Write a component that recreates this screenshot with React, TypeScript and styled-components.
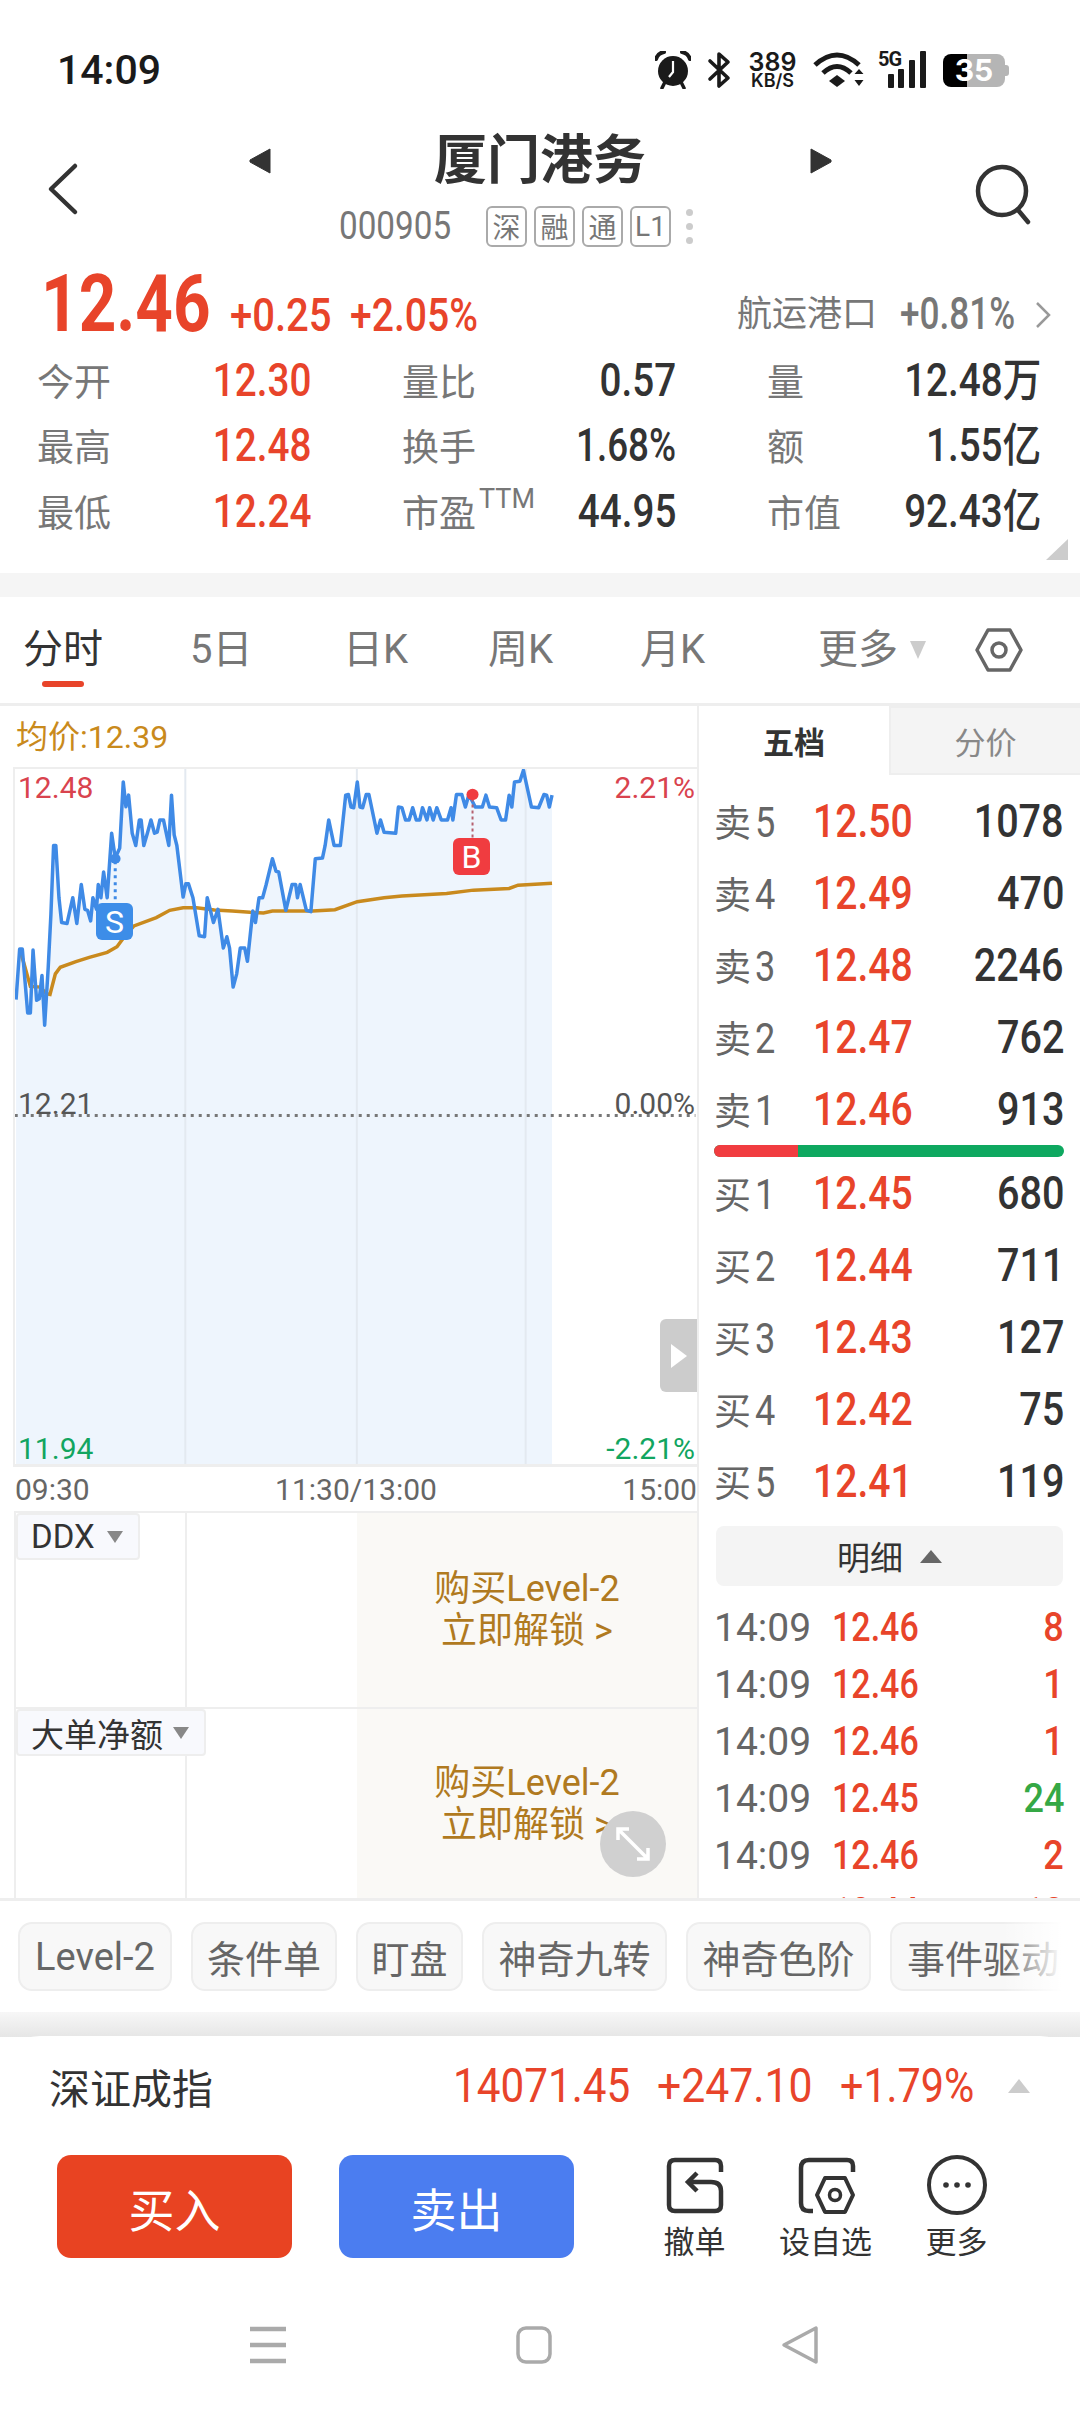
import React from 'react'
import styled, { createGlobalStyle } from 'styled-components'

const RED = '#e8442a'
const DARK = '#333333'
const GRAY = '#777777'
const LINE = '#eeeeee'

const GlobalStyle = createGlobalStyle`
  * { box-sizing: border-box; }
  html, body { margin: 0; padding: 0; background: #fff; }
  body { font-family: Roboto, 'Noto Sans CJK SC', sans-serif; color: ${DARK}; }
`

const Page = styled.div`
  width: 1080px;
  height: 2412px;
  display: flex;
  flex-direction: column;
  overflow: hidden;
  background: #fff;
`

// the quote font is a narrow DIN, so digits get squeezed horizontally
const Num = styled.span<{ $size: number; $sx?: number; $color?: string; $weight?: number; $origin?: string; $gap?: number }>`
  display: inline-block;
  margin-left: ${p => p.$gap ?? 0}px;
  font-size: ${p => p.$size}px;
  line-height: 1;
  font-weight: ${p => p.$weight ?? 500};
  color: ${p => p.$color ?? 'inherit'};
  white-space: nowrap;
  transform: scaleX(${p => p.$sx ?? 0.84});
  transform-origin: ${p => p.$origin ?? 'left'} center;
`

/* status bar */
const StatusBar = styled.div`
  height: 104px;
  padding: 36px 71px 0 57px;
  display: flex;
  align-items: center;
  justify-content: space-between;
  color: #1a1a1a;
`
const Clock = styled.div`
  font-size: 41px;
  font-weight: 500;
`
const StatusIcons = styled.div`
  display: flex;
  align-items: center;
  gap: 16px;
`
const Speed = styled.div`
  width: 49px;
  display: flex;
  flex-direction: column;
  align-items: center;
  font-family: Inter, sans-serif;
  font-weight: 600;
  line-height: 1;
`
const SpeedValue = styled.span`
  font-size: 25px;
  height: 21px;
  line-height: 21px;
`
const SpeedUnit = styled.span`
  font-size: 18px;
  height: 15px;
  line-height: 15px;
`
const Signal = styled.div`
  position: relative;
  width: 49px;
  height: 38px;
  margin-left: -2px;
`
const SignalLabel = styled.span`
  position: absolute;
  left: 0;
  top: -1px;
  font-size: 20px;
  line-height: 18px;
  font-weight: 700;
  letter-spacing: -1px;
`
const Battery = styled.div`
  position: relative;
  width: 62px;
  height: 33px;
  margin-right: 4px;
  border-radius: 8px;
  background: linear-gradient(90deg, #000 24px, #b5b5b5 24px);
  display: flex;
  align-items: center;
  justify-content: center;
  color: #fff;
  font-family: Inter, sans-serif;
  font-size: 30px;
  font-weight: 700;

  &::after {
    content: '';
    position: absolute;
    right: -4px;
    top: 11px;
    width: 4px;
    height: 11px;
    border-radius: 0 3px 3px 0;
    background: #b5b5b5;
  }
`

/* stock header */
const Header = styled.div`
  height: 160px;
  padding: 0 48px;
  display: flex;
  align-items: flex-start;
  justify-content: space-between;
`
const HeaderIcon = styled.svg`
  margin-top: 60px;
  flex: none;
  overflow: visible;
`
const HeaderCenter = styled.div`
  flex: 1;
  margin-left: 28px;
  display: flex;
  flex-direction: column;
  align-items: center;
  padding-top: 27px;
`
const TitleRow = styled.div`
  width: 583px;
  height: 60px;
  display: flex;
  align-items: center;
  justify-content: space-between;
`
const Title = styled.h1`
  margin: 0;
  font-size: 53px;
  font-weight: 700;
  line-height: 60px;
`
const CodeRow = styled.div`
  display: flex;
  align-items: center;
  height: 42px;
  margin-top: 14px;
  padding-right: 48px;
`
const Code = styled.div`
  width: 147px;
  color: ${GRAY};
`
const Tag = styled.span`
  width: 41px;
  height: 41px;
  margin-right: 7px;
  border: 2px solid #aaa;
  border-radius: 6px;
  display: flex;
  align-items: center;
  justify-content: center;
  font-size: 28px;
  color: ${GRAY};
`
const MoreDots = styled.div`
  margin-left: 8px;
  display: flex;
  flex-direction: column;
  gap: 7px;
`
const MoreDot = styled.i`
  width: 7px;
  height: 7px;
  border-radius: 50%;
  background: #cccccc;
`

/* quote block */
const Quote = styled.section`
  position: relative;
  height: 309px;
`
const PriceRow = styled.div`
  height: 83px;
  padding-left: 41px;
  display: grid;
  grid-template-columns: 189px 120px 387px 163px 135px auto;
  align-items: baseline;
  color: ${RED};
`
const IndustryName = styled.span`
  align-self: start;
  margin-top: 29px;
  font-size: 35px;
  line-height: 44px;
  color: ${GRAY};
`
const IndustryChange = styled(Num)`
  align-self: start;
  margin-top: 28px;
`
const IndustryChevron = styled.svg`
  align-self: start;
  margin-top: 38px;
`
const StatGrid = styled.div`
  padding-left: 37px;
  display: grid;
  grid-template-columns: repeat(3, 274.5px);
  column-gap: 90.5px;
  grid-auto-rows: 65.5px;
`
const Stat = styled.div`
  display: flex;
  align-items: center;
  justify-content: space-between;
`
const StatLabel = styled.span`
  font-size: 37px;
  color: ${GRAY};
  white-space: nowrap;
`
const Ttm = styled.span`
  display: inline-block;
  margin-left: 3px;
  font-size: 27px;
  line-height: 0;
  vertical-align: 19px;
`
const Corner = styled.i`
  position: absolute;
  right: 12px;
  bottom: 13px;
  width: 0;
  height: 0;
  border-left: 22px solid transparent;
  border-bottom: 21px solid #cccccc;
`
const Band = styled.div`
  height: 24px;
  flex: none;
  background: #f5f5f5;
`

/* period tabs */
const Tabs = styled.nav`
  height: 109px;
  flex: none;
  padding-left: 23px;
  display: grid;
  grid-template-columns: 167px 153px 145px 152px 178px 157px auto;
  align-items: center;
  border-bottom: 3px solid ${LINE};
`
const Tab = styled.div<{ $active?: boolean }>`
  position: relative;
  display: flex;
  align-items: center;
  font-size: 40px;
  line-height: 48px;
  color: ${p => (p.$active ? DARK : GRAY)};

  ${p =>
    p.$active &&
    `&::after {
      content: '';
      position: absolute;
      left: 19px;
      bottom: -13px;
      width: 42px;
      height: 6px;
      border-radius: 3px;
      background: ${RED};
    }`}
`
const Caret = styled.i<{ $w: number; $h: number; $color: string; $up?: boolean; $gap?: number }>`
  display: inline-block;
  flex: none;
  width: 0;
  height: 0;
  margin-left: ${p => p.$gap ?? 0}px;
  border-left: ${p => p.$w / 2}px solid transparent;
  border-right: ${p => p.$w / 2}px solid transparent;
  ${p => (p.$up ? 'border-bottom' : 'border-top')}: ${p => p.$h}px solid ${p => p.$color};
`

/* main split: chart on the left, order book on the right */
const Main = styled.div`
  height: 1195px;
  flex: none;
  display: flex;
  border-bottom: 3px solid ${LINE};
`
const LeftColumn = styled.div`
  width: 699px;
  flex: none;
  display: flex;
  flex-direction: column;
  border-right: 2px solid ${LINE};
`
const AvgRow = styled.div`
  height: 61px;
  flex: none;
  padding: 0 0 5px 16px;
  display: flex;
  align-items: center;
  font-size: 32px;
  color: #c98a1c;
`
const ChartBox = styled.div`
  position: relative;
  height: 700px;
  flex: none;
  margin-left: 13px;
  border-top: 2px solid ${LINE};
  border-left: 2px solid ${LINE};
  border-bottom: 3px solid ${LINE};
`
const ChartSvg = styled.svg`
  display: block;
  width: 100%;
  height: 100%;
`
const AxisLabel = styled.span<{ $top: number; $side: 'left' | 'right'; $color: string }>`
  position: absolute;
  top: ${p => p.$top}px;
  ${p => p.$side}: ${p => (p.$side === 'left' ? 3 : 2)}px;
  font-size: 30px;
  line-height: 34px;
  color: ${p => p.$color};
`
const TradePin = styled.div<{ $left: number; $top: number; $color: string }>`
  position: absolute;
  left: ${p => p.$left}px;
  top: ${p => p.$top}px;
  width: 37px;
  height: 37px;
  border-radius: 6px;
  background: ${p => p.$color};
  color: #fff;
  font-size: 32px;
  display: flex;
  align-items: center;
  justify-content: center;
`
const SideHandle = styled.div`
  position: absolute;
  right: 0;
  top: 550px;
  width: 37px;
  height: 73px;
  border-radius: 6px 0 0 6px;
  background: #cccccc;
  display: flex;
  align-items: center;
  justify-content: center;
`
const HandleArrow = styled.i`
  width: 0;
  height: 0;
  border-top: 12px solid transparent;
  border-bottom: 12px solid transparent;
  border-left: 16px solid #fff;
`
const TimeAxis = styled.div`
  height: 44px;
  flex: none;
  padding: 0 0 0 15px;
  display: flex;
  align-items: center;
  justify-content: space-between;
  font-size: 30px;
  color: #666;
`
const SubPanel = styled.div<{ $grow?: boolean }>`
  position: relative;
  margin-left: 14px;
  display: flex;
  border-top: 2px solid ${LINE};
  border-left: 2px solid ${LINE};
  ${p => (p.$grow ? 'flex: 1;' : 'height: 196px; flex: none;')}
`
const PanelBlank = styled.div`
  width: 341px;
  flex: none;
  background: linear-gradient(${LINE}, ${LINE}) 169px 0 / 2px 100% no-repeat;
`
const LockPane = styled.div`
  flex: 1;
  background: #faf9f6;
  display: flex;
  flex-direction: column;
  align-items: center;
  justify-content: center;
  font-size: 36px;
  line-height: 42px;
  color: #b07a1f;
`
const IndicatorPicker = styled.div`
  position: absolute;
  left: 0;
  top: 0;
  height: 47px;
  padding: 0 15px 0 13px;
  display: flex;
  align-items: center;
  background: #f8f9fd;
  border: 2px solid ${LINE};
  border-radius: 4px;
  font-size: 33px;
`
const ExpandButton = styled.div`
  position: absolute;
  left: 584px;
  top: 102px;
  width: 66px;
  height: 66px;
  border-radius: 50%;
  background: #d0d0d0;
  display: flex;
  align-items: center;
  justify-content: center;
`

const RightColumn = styled.div`
  flex: 1;
  min-width: 0;
  overflow: hidden;
`
const DepthTabs = styled.div`
  height: 69px;
  display: flex;
`
const DepthTab = styled.div<{ $active?: boolean }>`
  display: flex;
  align-items: center;
  justify-content: center;
  font-size: 31px;
  ${p =>
    p.$active
      ? `width: 190px; font-weight: 700; color: ${DARK};`
      : `flex: 1; color: #888; background: #f4f4f4; border: 2px solid ${LINE}; border-right: 0;`}
`
const Book = styled.div`
  padding: 10px 16px 0 15px;
`
const BookRow = styled.div`
  height: 72px;
  display: grid;
  grid-template-columns: 99px 96px 1fr;
  align-items: center;
`
const BookLabel = styled.span`
  font-size: 37px;
  color: #666;
  white-space: nowrap;
`
const BookQty = styled.span`
  text-align: right;
  color: ${DARK};
`
const RatioBar = styled.div`
  height: 12px;
  display: flex;
  border-radius: 6px;
  overflow: hidden;
  background: #0ea860;
`
const RatioFill = styled.div`
  background: #f13c40;
`
const DetailToggle = styled.div`
  height: 60px;
  margin: 9px 1px 13px 2px;
  border-radius: 8px;
  background: #f4f4f4;
  display: flex;
  align-items: center;
  justify-content: center;
  gap: 17px;
  font-size: 33px;
`
const TickRow = styled.div`
  height: 57px;
  display: grid;
  grid-template-columns: 118px 96px 1fr;
  align-items: center;
`
const TickTime = styled.span`
  font-size: 39px;
  color: #666;
`
const TickQty = styled.span`
  text-align: right;
`

/* shortcut chips */
const ChipRow = styled.div`
  position: relative;
  width: 1062px;
  height: 111px;
  flex: none;
  padding-left: 18px;
  display: flex;
  align-items: center;
  gap: 19px;
  overflow: hidden;

  &::after {
    content: '';
    position: absolute;
    right: 0;
    top: 0;
    bottom: 0;
    width: 60px;
    background: linear-gradient(90deg, rgba(255, 255, 255, 0), #fff);
  }
`
const Chip = styled.div<{ $w: number }>`
  width: ${p => p.$w}px;
  height: 69px;
  flex: none;
  border: 2px solid ${LINE};
  border-radius: 14px;
  background: #f8f8f8;
  display: flex;
  align-items: center;
  justify-content: center;
  font-size: 38px;
  color: #666;
  white-space: nowrap;
`
const SheetGap = styled.div`
  height: 25px;
  flex: none;
  background: linear-gradient(#f7f7f7, #e6e6e6);
`

/* bottom sheet */
const Sheet = styled.div`
  flex: 1;
  margin-top: -1px;
  background: #fff;
  border-radius: 40px 40px 0 0;
`
const IndexRow = styled.div`
  height: 119px;
  padding: 0 0 20px 49px;
  display: grid;
  grid-template-columns: 404px 204px 183px 168px auto;
  align-items: center;
  color: ${RED};
`
const IndexName = styled.span`
  font-size: 41px;
  color: ${DARK};
`
const TradeRow = styled.div`
  height: 103px;
  padding-left: 57px;
  display: flex;
  align-items: flex-start;
`
const TradeButton = styled.div<{ $color: string }>`
  width: 235px;
  height: 103px;
  margin-right: 47px;
  border-radius: 14px;
  background: ${p => p.$color};
  color: #fff;
  font-size: 46px;
  display: flex;
  align-items: center;
  justify-content: center;
`
const Tools = styled.div`
  display: flex;
  margin-left: 8px;
`
const Tool = styled.div`
  width: 131px;
  display: flex;
  flex-direction: column;
  align-items: center;
  font-size: 31px;
  line-height: 36px;
  color: ${DARK};
`
const ToolIcon = styled.svg`
  display: block;
  margin-bottom: 10px;
  flex: none;
`
const NavBar = styled.div`
  height: 80px;
  margin-top: 47px;
  padding-left: 248px;
  display: flex;
  align-items: center;
  gap: 226px;
`

const sells = [
  ['5', '12.50', '1078'],
  ['4', '12.49', '470'],
  ['3', '12.48', '2246'],
  ['2', '12.47', '762'],
  ['1', '12.46', '913'],
]
const buys = [
  ['1', '12.45', '680'],
  ['2', '12.44', '711'],
  ['3', '12.43', '127'],
  ['4', '12.42', '75'],
  ['5', '12.41', '119'],
]
const ticks = [
  ['12.46', '8', RED],
  ['12.46', '1', RED],
  ['12.46', '1', RED],
  ['12.45', '24', '#35a845'],
  ['12.46', '2', RED],
  ['12.44', '13', RED],
]
const chips = [
  ['Level-2', 154],
  ['条件单', 146],
  ['盯盘', 107],
  ['神奇九转', 185],
  ['神奇色阶', 185],
  ['事件驱动', 186],
] as const

// minute series, in the chart's own plotting units
const priceLine =
  '36,898 44,745 50,745 62,938 68,938 74,748 82,900 88,895 94,825 100,975 108,800 114,640 120,432 125,432 132,590 138,665 150,668 163,590 172,668 182,550 190,625 196,628 203,660 208,590 216,625 220,550 226,590 232,512 240,590 250,395 258,470 268,440 276,240 282,315 288,280 296,395 304,432 312,355 316,355 322,432 330,395 338,355 346,395 352,392 358,355 366,355 378,432 384,280 390,400 396,432 410,588 416,548 422,548 432,590 446,705 458,708 464,590 478,665 488,625 500,742 508,708 514,742 522,860 530,820 538,742 548,742 554,782 566,630 572,665 580,590 588,590 596,550 610,472 618,510 624,512 640,628 654,550 662,550 666,590 672,550 686,628 696,632 706,472 722,470 728,432 736,355 748,432 762,432 774,280 780,278 786,316 792,318 800,240 806,316 812,318 820,278 826,278 844,395 852,355 860,392 886,395 892,316 900,318 908,355 916,355 924,318 932,355 940,355 946,318 956,355 962,318 970,355 978,318 988,355 1002,355 1010,318 1014,355 1022,278 1034,278 1042,316 1050,278 1064,316 1080,316 1088,280 1096,316 1112,318 1122,355 1132,355 1140,280 1146,316 1152,240 1164,238 1172,205 1190,316 1206,318 1218,278 1224,280 1230,316 1236,280'
const avgLine =
  '44,745 54,790 68,858 90,860 104,880 112,882 124,820 135,800 170,783 200,770 240,755 262,738 276,712 300,675 350,650 380,628 410,620 440,620 480,627 520,630 560,634 590,636 610,630 700,630 750,626 800,602 860,590 900,585 1000,577 1060,567 1140,562 1160,552 1236,546'

const IntradayChart = () => (
  <ChartSvg viewBox="33.6 201 1527 2100" preserveAspectRatio="none">
    <polygon points={`36,2301 ${priceLine} 1236,2301`} fill="#eef5fd" />
    {[415, 799, 1177].map(x => (
      <line key={x} x1={x} x2={x} y1="201" y2="2301" stroke="#e3e9f0" strokeWidth="2" vectorEffect="non-scaling-stroke" />
    ))}
    <line x1="33" x2="1557" y1="1248" y2="1248" stroke="#777" strokeWidth="3" strokeDasharray="3 5" vectorEffect="non-scaling-stroke" />
    <polyline points={avgLine} fill="none" stroke="#c98a1e" strokeWidth="3.5" vectorEffect="non-scaling-stroke" />
    <polyline points={priceLine} fill="none" stroke="#3f8ae6" strokeWidth="3.5" strokeLinejoin="round" vectorEffect="non-scaling-stroke" />
    <line x1="258" x2="258" y1="480" y2="608" stroke="#3f8ae6" strokeWidth="3" strokeDasharray="3 4" vectorEffect="non-scaling-stroke" />
    <ellipse cx="258" cy="472" rx="12" ry="15" fill="#3f8ae6" />
    <line x1="1058" x2="1058" y1="290" y2="415" stroke="#b5606f" strokeWidth="2" strokeDasharray="3 3" vectorEffect="non-scaling-stroke" />
    <ellipse cx="1058" cy="278" rx="13.5" ry="17" fill="#f03c40" />
  </ChartSvg>
)

const LockedIndicator = () => (
  <LockPane>
    <span>购买Level-2</span>
    <span>立即解锁 &gt;</span>
  </LockPane>
)

const App = () => {
  return (
    <Page>
      <GlobalStyle />

      <StatusBar>
        <Clock>14:09</Clock>
        <StatusIcons>
          <svg width="36" height="38" viewBox="0 0 36 38">
            <circle cx="18" cy="20" r="15" fill="#1a1a1a" />
            <path d="M1 8 Q3 2 9 1 M35 8 Q33 2 27 1" fill="none" stroke="#1a1a1a" strokeWidth="4" strokeLinecap="round" />
            <path d="M7 37 L10 31 M29 37 L26 31" stroke="#1a1a1a" strokeWidth="3.5" strokeLinecap="round" />
            <path d="M18 10 V21 L14 26" fill="none" stroke="#fff" strokeWidth="2.2" />
          </svg>
          <svg width="25" height="38" viewBox="0 0 25 38">
            <path d="M3 10 L21 27 L12 35 V3 L21 11 L3 28" fill="none" stroke="#1a1a1a" strokeWidth="3.6" strokeLinejoin="round" strokeLinecap="round" />
          </svg>
          <Speed>
            <SpeedValue>389</SpeedValue>
            <SpeedUnit>KB/S</SpeedUnit>
          </Speed>
          <svg width="51" height="36" viewBox="0 0 51 36">
            <path d="M2 13 Q24 -7 46 13" fill="none" stroke="#1a1a1a" strokeWidth="5" />
            <path d="M10 21 Q24 8 38 21" fill="none" stroke="#1a1a1a" strokeWidth="5" />
            <path d="M24 23 L32 29 L24 35 L16 29 Z" fill="#1a1a1a" />
            <path d="M46 17 L50.500 22 H41.500 Z M46 34 L41.500 28 H50.500 Z" fill="#1a1a1a" />
          </svg>
          <Signal>
            <SignalLabel>5G</SignalLabel>
            <svg width="49" height="38" viewBox="0 0 49 38">
              <rect x="10" y="23" width="6" height="14" rx="1" fill="#1a1a1a" />
              <rect x="20" y="18" width="6" height="19" rx="1" fill="#1a1a1a" />
              <rect x="31" y="9" width="6" height="28" rx="1" fill="#1a1a1a" />
              <rect x="42" y="0" width="6" height="37" rx="1" fill="#1a1a1a" />
            </svg>
          </Signal>
          <Battery>35</Battery>
        </StatusIcons>
      </StatusBar>

      <Header>
        <HeaderIcon width="30" height="50" viewBox="0 0 30 50">
          <path d="M27 2 L3 25 L27 48" fill="none" stroke={DARK} strokeWidth="4.5" strokeLinecap="round" strokeLinejoin="round" />
        </HeaderIcon>
        <HeaderCenter>
          <TitleRow>
            <svg width="22" height="26" viewBox="0 0 22 26">
              <path d="M21 1 V25 L1 14 V12 Z" fill={DARK} stroke={DARK} strokeLinejoin="round" />
            </svg>
            <Title>厦门港务</Title>
            <svg width="22" height="26" viewBox="0 0 22 26">
              <path d="M1 1 V25 L21 14 V12 Z" fill={DARK} stroke={DARK} strokeLinejoin="round" />
            </svg>
          </TitleRow>
          <CodeRow>
            <Code>
              <Num $size={38} $sx={0.875} $weight={400}>000905</Num>
            </Code>
            <Tag>深</Tag>
            <Tag>融</Tag>
            <Tag>通</Tag>
            <Tag>L1</Tag>
            <MoreDots>
              <MoreDot />
              <MoreDot />
              <MoreDot />
            </MoreDots>
          </CodeRow>
        </HeaderCenter>
        <HeaderIcon width="58" height="60" viewBox="0 0 58 60">
          <circle cx="28" cy="27" r="24" fill="none" stroke={DARK} strokeWidth="4.5" />
          <path d="M44 46 L54 58" stroke={DARK} strokeWidth="4.5" strokeLinecap="round" />
        </HeaderIcon>
      </Header>

      <Quote>
        <PriceRow>
          <Num $size={80} $sx={0.82} $weight={700}>12.46</Num>
          <Num $size={46} $sx={0.87}>+0.25</Num>
          <Num $size={46} $sx={0.85}>+2.05%</Num>
          <IndustryName>航运港口</IndustryName>
          <IndustryChange $size={44} $sx={0.8} $color={GRAY}>+0.81%</IndustryChange>
          <IndustryChevron width="16" height="26" viewBox="0 0 16 26">
            <path d="M2 1 L14 13 L2 25" fill="none" stroke="#999" strokeWidth="2.5" />
          </IndustryChevron>
        </PriceRow>
        <StatGrid>
          <Stat><StatLabel>今开</StatLabel><Num $size={46} $color={RED} $origin="right">12.30</Num></Stat>
          <Stat><StatLabel>量比</StatLabel><Num $size={46} $origin="right">0.57</Num></Stat>
          <Stat><StatLabel>量</StatLabel><Num $size={46} $origin="right">12.48万</Num></Stat>
          <Stat><StatLabel>最高</StatLabel><Num $size={46} $color={RED} $origin="right">12.48</Num></Stat>
          <Stat><StatLabel>换手</StatLabel><Num $size={46} $sx={0.8} $origin="right">1.68%</Num></Stat>
          <Stat><StatLabel>额</StatLabel><Num $size={46} $origin="right">1.55亿</Num></Stat>
          <Stat><StatLabel>最低</StatLabel><Num $size={46} $color={RED} $origin="right">12.24</Num></Stat>
          <Stat><StatLabel>市盈<Ttm>TTM</Ttm></StatLabel><Num $size={46} $origin="right">44.95</Num></Stat>
          <Stat><StatLabel>市值</StatLabel><Num $size={46} $origin="right">92.43亿</Num></Stat>
        </StatGrid>
        <Corner />
      </Quote>
      <Band />

      <Tabs>
        <Tab $active>分时</Tab>
        <Tab>5日</Tab>
        <Tab>日K</Tab>
        <Tab>周K</Tab>
        <Tab>月K</Tab>
        <Tab>
          更多
          <Caret $w={16} $h={18} $color="#cccccc" $gap={12} />
        </Tab>
        <svg width="48" height="46" viewBox="0 0 48 46">
          <path d="M13 3 H35 L46 23 L35 43 H13 L2 23 Z" fill="none" stroke="#666" strokeWidth="3.5" strokeLinejoin="round" />
          <circle cx="24" cy="23" r="7" fill="none" stroke="#666" strokeWidth="3.5" />
        </svg>
      </Tabs>

      <Main>
        <LeftColumn>
          <AvgRow>均价:12.39</AvgRow>
          <ChartBox>
            <IntradayChart />
            <AxisLabel $top={2} $side="left" $color="#d9434e">12.48</AxisLabel>
            <AxisLabel $top={2} $side="right" $color="#d9434e">2.21%</AxisLabel>
            <AxisLabel $top={318} $side="left" $color="#555">12.21</AxisLabel>
            <AxisLabel $top={318} $side="right" $color="#555">0.00%</AxisLabel>
            <AxisLabel $top={663} $side="left" $color="#12a560">11.94</AxisLabel>
            <AxisLabel $top={663} $side="right" $color="#12a560">-2.21%</AxisLabel>
            <TradePin $left={81} $top={134} $color="#3d8de8">S</TradePin>
            <TradePin $left={438} $top={69} $color="#f03c40">B</TradePin>
            <SideHandle><HandleArrow /></SideHandle>
          </ChartBox>
          <TimeAxis>
            <span>09:30</span>
            <span>11:30/13:00</span>
            <span>15:00</span>
          </TimeAxis>
          <SubPanel>
            <PanelBlank />
            <LockedIndicator />
            <IndicatorPicker>
              DDX
              <Caret $w={17} $h={12} $color="#888" $gap={12} />
            </IndicatorPicker>
          </SubPanel>
          <SubPanel $grow>
            <PanelBlank />
            <LockedIndicator />
            <IndicatorPicker>
              大单净额
              <Caret $w={17} $h={12} $color="#888" $gap={10} />
            </IndicatorPicker>
            <ExpandButton>
              <svg width="36" height="36" viewBox="0 0 36 36">
                <path d="M3 14 V3 H14 M3 3 L33 33 M22 33 H33 V22" fill="none" stroke="#fff" strokeWidth="3.5" />
              </svg>
            </ExpandButton>
          </SubPanel>
        </LeftColumn>

        <RightColumn>
          <DepthTabs>
            <DepthTab $active>五档</DepthTab>
            <DepthTab>分价</DepthTab>
          </DepthTabs>
          <Book>
            {sells.map(([level, price, qty]) => (
              <BookRow key={level}>
                <BookLabel>卖<Num $size={43} $sx={0.84} $weight={400} $gap={4}>{level}</Num></BookLabel>
                <Num $size={46} $sx={0.85} $color={RED}>{price}</Num>
                <BookQty><Num $size={46} $sx={0.86} $origin="right">{qty}</Num></BookQty>
              </BookRow>
            ))}
            <RatioBar>
              <RatioFill style={{ width: `${(84 / 352) * 100}%` }} />
            </RatioBar>
            {buys.map(([level, price, qty]) => (
              <BookRow key={level}>
                <BookLabel>买<Num $size={43} $sx={0.84} $weight={400} $gap={4}>{level}</Num></BookLabel>
                <Num $size={46} $sx={0.85} $color={RED}>{price}</Num>
                <BookQty><Num $size={46} $sx={0.86} $origin="right">{qty}</Num></BookQty>
              </BookRow>
            ))}
            <DetailToggle>
              明细
              <Caret $w={22} $h={13} $color="#666" $up />
            </DetailToggle>
            {ticks.map(([price, qty, color], i) => (
              <TickRow key={i}>
                <TickTime>14:09</TickTime>
                <Num $size={40} $sx={0.85} $color={RED}>{price}</Num>
                <TickQty><Num $size={40} $sx={0.9} $color={color} $origin="right">{qty}</Num></TickQty>
              </TickRow>
            ))}
          </Book>
        </RightColumn>
      </Main>

      <ChipRow>
        {chips.map(([name, width]) => (
          <Chip key={name} $w={width}>{name}</Chip>
        ))}
      </ChipRow>
      <SheetGap />

      <Sheet>
        <IndexRow>
          <IndexName>深证成指</IndexName>
          <Num $size={48} $sx={0.88} $weight={400}>14071.45</Num>
          <Num $size={48} $sx={0.89} $weight={400}>+247.10</Num>
          <Num $size={48} $sx={0.86} $weight={400}>+1.79%</Num>
          <Caret $w={22} $h={14} $color="#cccccc" $up />
        </IndexRow>
        <TradeRow>
          <TradeButton $color="#e84322">买入</TradeButton>
          <TradeButton $color="#4b7df0">卖出</TradeButton>
          <Tools>
            <Tool>
              <ToolIcon width="60" height="60" viewBox="0 0 60 60">
                <path d="M56 17 V11 Q56 5 50 5 H10 Q4 5 4 11 V50 Q4 56 10 56 H50 Q56 56 56 50 V36 Q56 27 46 27 H24" fill="none" stroke={DARK} strokeWidth="4.5" />
                <path d="M32 18 L23 27 L32 36" fill="none" stroke={DARK} strokeWidth="4.5" />
              </ToolIcon>
              撤单
            </Tool>
            <Tool>
              <ToolIcon width="60" height="60" viewBox="0 0 60 60">
                <path d="M57 17 V11 Q57 5 51 5 H13 Q5 5 5 13 V48 Q5 56 13 56 H17" fill="none" stroke={DARK} strokeWidth="4.5" />
                <path d="M29 23 H49 L57 40 L49 57 H29 L21 40 Z" fill="#fff" stroke={DARK} strokeWidth="4" strokeLinejoin="round" />
                <circle cx="39" cy="40" r="5.500" fill="none" stroke={DARK} strokeWidth="3.5" />
              </ToolIcon>
              设自选
            </Tool>
            <Tool>
              <ToolIcon width="60" height="60" viewBox="0 0 60 60">
                <circle cx="30" cy="30" r="28" fill="none" stroke={DARK} strokeWidth="4" />
                <circle cx="19" cy="30" r="2.800" fill={DARK} />
                <circle cx="30" cy="30" r="2.800" fill={DARK} />
                <circle cx="41" cy="30" r="2.800" fill={DARK} />
              </ToolIcon>
              更多
            </Tool>
          </Tools>
        </TradeRow>
        <NavBar>
          <svg width="40" height="40" viewBox="0 0 40 40">
            <path d="M2 4 H38 M2 20 H38 M2 36 H38" stroke="#aaa" strokeWidth="4.5" />
          </svg>
          <svg width="40" height="40" viewBox="0 0 40 40">
            <rect x="4" y="3" width="32" height="34" rx="8" fill="none" stroke="#aaa" strokeWidth="3.5" />
          </svg>
          <svg width="40" height="40" viewBox="0 0 40 40">
            <path d="M36 3 V37 L4 20 Z" fill="none" stroke="#aaa" strokeWidth="3.5" strokeLinejoin="round" />
          </svg>
        </NavBar>
      </Sheet>
    </Page>
  )
}

export default App
